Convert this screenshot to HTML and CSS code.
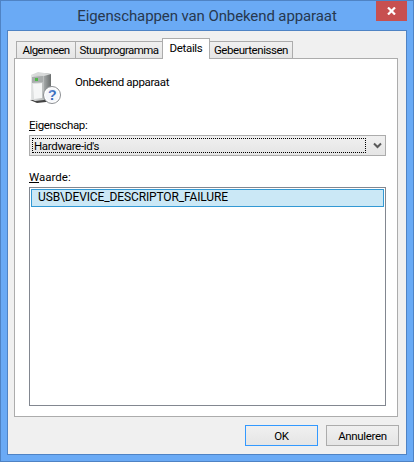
FILE: index.html
```html
<!DOCTYPE html>
<html lang="nl">
<head>
  <meta charset="UTF-8">
  <title>Eigenschappen van Onbekend apparaat</title>
  <link rel="stylesheet" href="styles.css">
</head>
<body>
  <div class="window">
    <div class="titlebar">
      <span class="title">Eigenschappen van Onbekend apparaat</span>
      <button class="close" aria-label="Sluiten">
        <svg width="9" height="8" viewBox="0 0 9 8"><path d="M1 0.5 L8 7.5 M8 0.5 L1 7.5" stroke="#fff" stroke-width="2.2" fill="none"/></svg>
      </button>
    </div>

    <div class="client">
      <div class="tabs">
        <div class="tab">Algemeen</div>
        <div class="tab tab-wide">Stuurprogramma</div>
        <div class="tab tab-active">Details</div>
        <div class="tab tab-events">Gebeurtenissen</div>
      </div>

      <div class="panel">
        <div class="device">
          <svg class="device-icon" width="33" height="33" viewBox="0 0 33 33">
            <defs>
              <linearGradient id="front" x1="0" x2="1" y1="0" y2="0">
                <stop offset="0" stop-color="#e4e6e6"/>
                <stop offset="1" stop-color="#b9bcbc"/>
              </linearGradient>
              <linearGradient id="side" x1="0" x2="1" y1="0" y2="0">
                <stop offset="0" stop-color="#a3a7a7"/>
                <stop offset="1" stop-color="#6a6e6e"/>
              </linearGradient>
              <radialGradient id="badge" cx="0.4" cy="0.3" r="0.8">
                <stop offset="0" stop-color="#5f8fd8"/>
                <stop offset="1" stop-color="#1c4a9c"/>
              </radialGradient>
            </defs>
            <path d="M1 29 L20 27 L26 30 L8 32 Z" fill="#222" opacity="0.85"/>
            <path d="M2 4 L15 2 L15 29 L6 30 L2 28 Z" fill="url(#front)"/>
            <path d="M15 2 L22 3 L22 26 L15 29 Z" fill="url(#side)"/>
            <path d="M2 4 L9 1 L22 3 L15 5 Z" fill="#d8dada"/>
            <path d="M3 6 L14 5 L14 11 L3 12 Z" fill="#a8acac"/>
            <path d="M6 7 h3 v3 h-3 Z" fill="#4fb84a"/>
            <path d="M4 13 L13 12 L13 27 L5 28 Z" fill="#f5f6f6"/>
            <circle cx="23" cy="24" r="8.5" fill="#fff" stroke="#8c8f93"/>
            <circle cx="23" cy="24" r="6.8" fill="#f4f6fa"/>
            <text class="badge-mark" x="23" y="29" text-anchor="middle" fill="url(#badge)">?</text>
          </svg>
          <span class="device-name">Onbekend apparaat</span>
        </div>

        <label class="field-label"><u>E</u>igenschap:</label>
        <div class="combo">
          <div class="combo-value">Hardware-id's</div>
          <svg class="combo-arrow" width="9" height="7" viewBox="0 0 9 7"><path d="M1 1.5 L4.5 5 L8 1.5" stroke="#5a5a5a" stroke-width="2" fill="none"/></svg>
        </div>

        <label class="field-label field-label-value"><u>W</u>aarde:</label>
        <div class="listbox">
          <div class="list-row">USB\DEVICE_DESCRIPTOR_FAILURE</div>
        </div>
      </div>

      <div class="buttons">
        <button class="btn btn-default">OK</button>
        <button class="btn">Annuleren</button>
      </div>
    </div>
  </div>
</body>
</html>
```

FILE: styles.css
```css
* {
  box-sizing: border-box;
}

html, body {
  margin: 0;
  height: 100%;
  background: #6aaaf5;
}

body {
  font-family: 'Roboto', 'Liberation Sans', sans-serif;
  font-size: 11.5px;
  letter-spacing: -0.33px;
  color: #000;
}

.window {
  width: 414px;
  height: 462px;
  border: 1px solid #4f83c4;
  padding: 0 6px 6px;
  background: #6aaaf5;
  display: flex;
  flex-direction: column;
}

.titlebar {
  height: 29px;
  display: flex;
  justify-content: center;
  position: relative;
}

.title {
  font-size: 15px;
  letter-spacing: -0.1px;
  line-height: 30px;
  color: #27384f;
}

.close {
  position: absolute;
  top: 0;
  right: 0;
  width: 31px;
  height: 20px;
  padding: 0;
  border: 0;
  background: #c75050;
  display: flex;
  align-items: center;
  justify-content: center;
}

.client {
  flex: 1;
  background: #f0f0f0;
  border: 1px solid #4f83c4;
  padding: 7px 8px 8px 6px;
  display: flex;
  flex-direction: column;
}

.tabs {
  display: flex;
  height: 20px;
  flex: none;
  align-items: flex-end;
  padding-left: 2px;
  position: relative;
  z-index: 1;
}

.tab {
  height: 17px;
  width: 60px;
  margin-right: -1px;
  border: 1px solid #acacac;
  border-bottom: 0;
  background: linear-gradient(to bottom, #f0f0f0, #e5e5e5);
  text-align: center;
  line-height: 16px;
  letter-spacing: -0.55px;
}

.tab-wide {
  width: 88px;
}

.tab-active {
  height: 21px;
  width: 48px;
  background: #fff;
  line-height: 19px;
  letter-spacing: -0.33px;
  position: relative;
  z-index: 1;
  margin-bottom: -1px;
}

.tab-events {
  width: 84px;
  letter-spacing: -0.45px;
}

.panel {
  height: 359px;
  flex: none;
  background: #fff;
  border: 1px solid #acacac;
  padding: 12px 11px 10px 14px;
  display: flex;
  flex-direction: column;
}

.device {
  display: flex;
  align-items: flex-start;
  height: 34px;
  margin-bottom: 11px;
}

.device-icon {
  display: block;
}

.badge-mark {
  font-family: 'Liberation Sans', sans-serif;
  font-weight: bold;
  font-size: 14px;
}

.device-name {
  margin-left: 13px;
  margin-top: 3px;
  line-height: 16px;
}

.field-label {
  display: block;
  line-height: 18px;
  margin-bottom: 1px;
}

.field-label-value {
  margin-top: 12px;
  letter-spacing: 0;
}

.combo {
  height: 21px;
  flex: none;
  border: 1px solid #acacac;
  background: linear-gradient(to bottom, #f0f0f0, #e5e5e5);
  display: flex;
  align-items: center;
  padding: 2px;
}

.combo-value {
  flex: 1;
  height: 15px;
  border: 1px dotted #000;
  line-height: 15px;
  padding-left: 1px;
}

.combo-arrow {
  margin: 0 1px 0 7px;
}

.listbox {
  flex: 1;
  border: 1px solid #828790;
  padding: 1px;
  background: #fff;
}

.list-row {
  height: 18px;
  border: 1px solid #3399d4;
  background: #cbe8f6;
  font-size: 12px;
  letter-spacing: -0.13px;
  line-height: 15px;
  padding-left: 6px;
}

.buttons {
  display: flex;
  justify-content: flex-end;
  gap: 8px;
  margin-top: 8px;
  margin-right: -1px;
}

.btn {
  width: 73px;
  height: 21px;
  padding: 0;
  font: inherit;
  letter-spacing: inherit;
  color: #000;
  border: 1px solid #acacac;
  background: linear-gradient(to bottom, #f0f0f0, #e5e5e5);
}

.btn-default {
  border-color: #3399ff;
}
```
